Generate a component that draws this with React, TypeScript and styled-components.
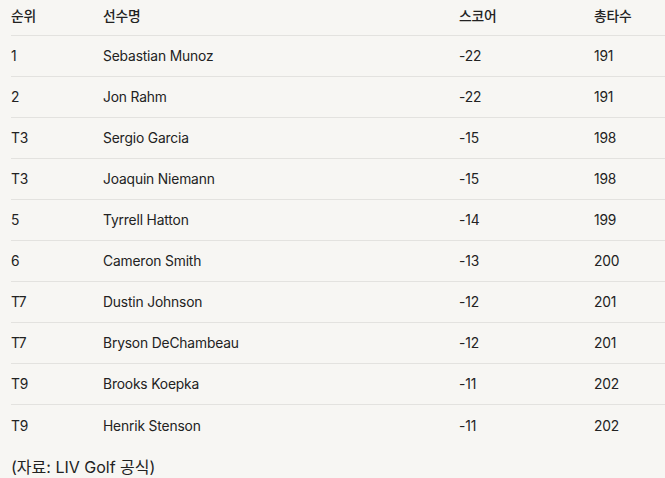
import React from "react";
import styled, { createGlobalStyle } from "styled-components";

const GlobalStyle = createGlobalStyle`
  html, body {
    margin: 0;
    padding: 0;
    background: #f7f6f3;
  }
  body {
    font-family: Inter, "Noto Sans CJK KR", sans-serif;
    color: #222;
    overflow: hidden;
  }
`;

const Page = styled.main`
  padding: 0 0 0 11px;
  width: 665px;
  height: 478px;
  box-sizing: border-box;
`;

const Table = styled.div`
  width: 654px;
`;

const Row = styled.div<{ header?: boolean; last?: boolean }>`
  display: grid;
  grid-template-columns: 92px 356px 135px 1fr;
  align-items: center;
  height: ${(p) => (p.header ? "36px" : "41px")};
  box-sizing: border-box;
  padding-bottom: ${(p) => (p.header ? "6px" : "0")};
  border-bottom: ${(p) => (p.last ? "none" : "1px solid #e3e2df")};
  font-size: 13.8px;
  letter-spacing: -0.15px;
  font-weight: ${(p) => (p.header ? 500 : 400)};
`;

const Cell = styled.span`
  white-space: nowrap;
`;

const Caption = styled.p`
  margin: 11px 0 0;
  font-size: 16px;
  line-height: 20px;
`;

const rows = [
  ["1", "Sebastian Munoz", "-22", "191"],
  ["2", "Jon Rahm", "-22", "191"],
  ["T3", "Sergio Garcia", "-15", "198"],
  ["T3", "Joaquin Niemann", "-15", "198"],
  ["5", "Tyrrell Hatton", "-14", "199"],
  ["6", "Cameron Smith", "-13", "200"],
  ["T7", "Dustin Johnson", "-12", "201"],
  ["T7", "Bryson DeChambeau", "-12", "201"],
  ["T9", "Brooks Koepka", "-11", "202"],
  ["T9", "Henrik Stenson", "-11", "202"],
];

export default function App() {
  return (
    <Page>
      <GlobalStyle />
      <Table>
        <Row header>
          <Cell>순위</Cell>
          <Cell>선수명</Cell>
          <Cell>스코어</Cell>
          <Cell>총타수</Cell>
        </Row>
        {rows.map((r, i) => (
          <Row key={i} last={i === rows.length - 1}>
            {r.map((c, j) => (
              <Cell key={j}>{c}</Cell>
            ))}
          </Row>
        ))}
      </Table>
      <Caption>(자료: LIV Golf 공식)</Caption>
    </Page>
  );
}
